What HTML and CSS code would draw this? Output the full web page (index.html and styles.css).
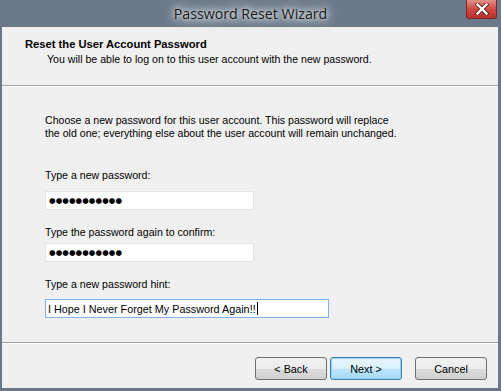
FILE: index.html
```html
<!DOCTYPE html>
<html>
<head>
<meta charset="utf-8">
<link rel="stylesheet" href="styles.css">
</head>
<body>
<div class="window">
  <div class="titlebar">
    <div class="title">Password Reset Wizard</div>
    <div class="close"><svg width="14" height="12" viewBox="0 0 14 12"><path d="M2.5 1.5 L11.5 10.5 M11.5 1.5 L2.5 10.5" stroke="#5a1a16" stroke-width="4" stroke-linecap="square"/><path d="M2.5 1.5 L11.5 10.5 M11.5 1.5 L2.5 10.5" stroke="#fff" stroke-width="2.4" stroke-linecap="square"/></svg></div>
  </div>
  <div class="client">
    <div class="header">
      <div class="h-title">Reset the User Account Password</div>
      <div class="h-sub">You will be able to log on to this user account with the new password.</div>
    </div>
    <div class="body">
      <p class="intro">Choose a new password for this user account. This password will replace<br>the old one; everything else about the user account will remain unchanged.</p>
      <div class="field f1">
        <div class="label">Type a new password:</div>
        <div class="input short"><span class="dots">●●●●●●●●●●●</span></div>
      </div>
      <div class="field f2">
        <div class="label">Type the password again to confirm:</div>
        <div class="input short"><span class="dots">●●●●●●●●●●●</span></div>
      </div>
      <div class="field f3">
        <div class="label">Type a new password hint:</div>
        <div class="input long"><span class="hint">I Hope I Never Forget My Password Again!!</span><span class="caret"></span></div>
      </div>
    </div>
    <div class="footer">
      <button class="btn">&lt; Back</button>
      <button class="btn default">Next &gt;</button>
      <button class="btn cancel">Cancel</button>
    </div>
  </div>
</div>
</body>
</html>
```
FILE: styles.css
```css
html, body {
  margin: 0;
  padding: 0;
  background: #6b7889;
}
.window {
  width: 501px;
  height: 391px;
  display: flex;
  flex-direction: column;
  background: #6b7889;
  font-family: "Liberation Sans", Arial, sans-serif;
  font-size: 10.6px;
  color: #000;
}
.titlebar {
  height: 27px;
  position: relative;
  display: flex;
  justify-content: center;
  align-items: center;
  flex-shrink: 0;
}
.title {
  font-family: "Open Sans", "Liberation Sans", sans-serif;
  font-size: 14.2px;
  color: #1a1a1a;
  line-height: 20px;
  margin-top: 0;
  text-shadow: 0 0 4px #e6e9ed, 0 0 8px #d4d9df, 0 0 12px #c4cbd3, 0 0 16px #b4bcc6, 0 0 20px #a6afba;
}
.close {
  position: absolute;
  right: 4px;
  top: 0;
  width: 31px;
  height: 19px;
  background: linear-gradient(#e39088, #cf4b42 50%, #b8302a);
  border: 1px solid #7a2a26;
  border-top: none;
  border-radius: 0 0 3px 3px;
  display: flex;
  align-items: center;
  justify-content: center;
  box-sizing: border-box;
}
.client {
  flex: 1;
  margin: 0 3px 3px 2px;
  background: #f0f0f0;
  display: flex;
  flex-direction: column;
}
.header {
  height: 59px;
  padding: 11px 0 0 23px;
  box-sizing: border-box;
  border-bottom: 1px solid #a0a0a0;
  box-shadow: 0 1px 0 #fff;
}
.h-title {
  font-weight: bold;
  font-size: 11.2px;
  line-height: 13px;
}
.h-sub {
  padding-left: 22px;
  line-height: 14px;
  margin-top: 1px;
}
.body {
  flex: 1;
  padding: 28px 0 0 43px;
}
.intro {
  margin: 0;
  line-height: 13px;
  white-space: nowrap;
}
.field .label {
  line-height: 13px;
}
.f1 { margin-top: 29px; }
.f2 { margin-top: 16px; }
.f3 { margin-top: 16px; }
.input {
  height: 19px;
  background: #fff;
  border: 1px solid #e3e3e3;
  box-sizing: border-box;
  display: flex;
  align-items: center;
  padding-left: 3px;
}
.input.short { width: 209px; }
.f1 .input { margin-top: 9px; }
.f2 .input { margin-top: 4px; }
.f3 .input { margin-top: 8px; }
.input.long {
  width: 284px;
  border-color: #7eb4ea;
  padding-left: 2px;
}
.dots {
  font-family: "DejaVu Sans", sans-serif;
  font-size: 7.5px;
  letter-spacing: 0.1px;
}
.hint {
  font-size: 10.8px;
}
.caret {
  display: inline-block;
  width: 1px;
  height: 13px;
  background: #000;
  margin-left: 1px;
}
.footer {
  height: 46px;
  border-top: 1px solid #a0a0a0;
  box-shadow: inset 0 1px 0 #fff;
  display: flex;
  align-items: flex-start;
  padding: 14px 0 0 253px;
  box-sizing: border-box;
  flex-shrink: 0;
}
.btn {
  width: 72px;
  height: 23px;
  font-family: "Liberation Sans", Arial, sans-serif;
  font-size: 10.8px;
  color: #000;
  border: 1px solid #707070;
  border-radius: 3px;
  background: linear-gradient(#f2f2f2, #ebebeb 50%, #dddddd 51%, #cfcfcf);
  padding: 0;
  margin-right: 3px;
}
.btn.default {
  border-color: #3c7fb1;
  box-shadow: inset 0 0 0 1px #9ad3f0;
  background: linear-gradient(#eaf6fd, #d9f0fc 50%, #bee6fd 51%, #a7d9f5);
}
.btn.cancel {
  margin-left: 10px;
}
```
